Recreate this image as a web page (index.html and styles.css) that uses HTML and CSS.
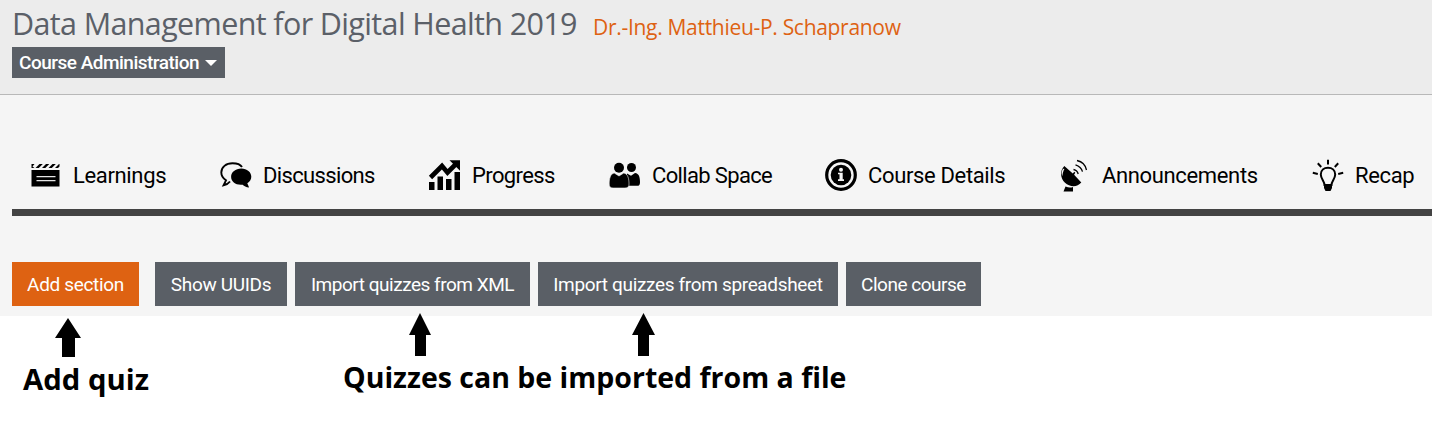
FILE: index.html
```html
<!DOCTYPE html>
<html lang="en">
<head>
<meta charset="utf-8">
<title>Data Management for Digital Health 2019</title>
<link rel="stylesheet" href="styles.css">
</head>
<body>
<div class="page">
  <header class="course-header">
    <div class="heading">
      <h1 class="title">Data Management for Digital Health 2019</h1>
      <span class="teacher">Dr.-Ing. Matthieu-P. Schapranow</span>
    </div>
    <button class="admin"><span class="admin-label">Course Administration</span><span class="caret"></span></button>
  </header>
  <main class="content">
    <nav class="tabs">
      <a class="tab"><svg class="icon" viewBox="0 0 32 32"><path d="M5.500 11 9.500 7h3.300l-4 4zM12 11l4-4h3.300l-4 4zM18.500 11l4-4h3.300l-4 4zM25 11l4-4h.5v2.500L28 11zM1.500 13h28v16h-28z"/><path d="M1.500 7h3l-2 2.500 2 1.500h-3z"/><path d="M1.500 29.500h28" stroke="#777"/><path d="M6.500 19.700h19M6.500 23.700h19" stroke="#e5e5e5" stroke-width="1.300"/></svg><span>Learnings</span></a>
      <a class="tab"><svg class="icon" viewBox="0 0 32 32"><path d="M22 10C20.500 7.500 17 6.200 12.500 6.200 6 6.200 1.300 10.200 1.300 15.500c0 3.500 2 6 4.700 7.800L3.500 28.300c3.200-.7 5.200-2 6.500-3.800" fill="none" stroke="#000" stroke-width="1.900"/><path d="M21.300 11.500c5.700 0 10 3.600 10 8.300 0 2.900-1.600 5-4 6.400l1.800 4.400c-3-.4-5-1.500-6.400-2.900-6.600.9-11.600-2.900-11.600-7.900 0-4.700 4.500-8.300 10.200-8.300z"/></svg><span>Discussions</span></a>
      <a class="tab"><svg class="icon" viewBox="0 0 32 32"><path d="M0 25h5.500v8H0zM8.500 19.500h5.500V33H8.500zM17 22h5.500v11H17zM25.500 15H31v18h-5.500z"/><path d="M1.500 20.500 13 9l5.500 6.500 9-9" fill="none" stroke="#000" stroke-width="4.600"/><path d="M20.500 3.200H31v10.500z"/></svg><span>Progress</span></a>
      <a class="tab"><svg class="icon" viewBox="0 0 32 32"><circle cx="10" cy="10.700" r="5"/><circle cx="22.500" cy="10.500" r="4.500"/><path d="M18 16.500l4 2.200 4-2.700c4 .5 5 4 5 9.200 0 2.500-.7 3.600-3 3.600H18z"/><path d="M.2 27c0-5.500 1.300-10.300 5-11l4.800 3 4.800-3c4 .7 5.200 5.500 5.200 11 0 2.700-1 4-4 4H4c-2.800 0-3.800-1.300-3.800-4z" stroke="#f5f5f5" stroke-width=".6"/></svg><span>Collab Space</span></a>
      <a class="tab"><svg class="icon" viewBox="0 0 32 32"><circle cx="16" cy="18" r="14.300" fill="none" stroke="#000" stroke-width="3.200"/><circle cx="16" cy="18" r="10.300"/><circle cx="16" cy="12.700" r="2" fill="#f5f5f5"/><path d="M13 15.800h4.700v6.500H19v1.600h-6v-1.600h1.500v-5H13z" fill="#f5f5f5"/></svg><span>Course Details</span></a>
      <a class="tab"><svg class="icon" viewBox="0 0 32 32"><path d="M5.300 9 13.800 16.500l1.500-1.700 1 1-1.200 2 7.200 7.700c-4 5-11.500 4.700-16.300.2C1.300 21.200.6 14 5.300 9z"/><path d="M3.600 12.500c-1.300 2.500-1.200 4.700-.2 6.500.2-2.600.9-5 2-7-.6-.4-1.300-.3-1.800.5z" fill="#f5f5f5"/><path d="M6.500 29.500c3 1.300 5.200 1.300 7.500.5v4.400H4.500z"/><path d="M14.500 12.500c3 .6 4.200 2.300 4.700 4.500M16.500 7.900c4 1.200 6.200 3.800 7 6.800M18 3.500c5.300 1.200 8.600 5 9.500 9.500" fill="none" stroke="#000" stroke-width="1.300"/></svg><span>Announcements</span></a>
      <a class="tab"><svg class="icon" viewBox="0 0 32 32"><path d="M12.500 28c0-4-3.700-6.300-3.700-10.500 0-4.200 3.200-6.800 7.200-6.800s7.200 2.600 7.200 6.800c0 4.200-3.700 6.500-3.700 10.500z" fill="none" stroke="#000" stroke-width="2"/><path d="M12 27h8v4l-1.500 3h-5L12 31z"/><path d="M16 2.800v4.800M5.800 6.300l3.400 3.700M26.200 6.300 22.800 10M.8 15.800l5 1.100M31.200 15.800l-5 1.100" fill="none" stroke="#000" stroke-width="2"/></svg><span>Recap</span></a>
    </nav>
    <div class="actions">
      <button class="btn primary">Add section</button>
      <button class="btn">Show UUIDs</button>
      <button class="btn wide">Import quizzes from XML</button>
      <button class="btn">Import quizzes from spreadsheet</button>
      <button class="btn wide">Clone course</button>
    </div>
  </main>
  <div class="notes">
    <span class="note-add">Add quiz</span>
    <span class="note-import">Quizzes can be imported from a file</span>
  </div>
  <svg class="arrows" viewBox="0 0 700 50"><path d="M68 8l13 20h-6v19H62V28h-7zM420 3l11 22h-5v21h-11V25h-6zM643.500 3 655 25h-6v21h-11V25h-6z"/></svg>
</div>
</body>
</html>
```
FILE: styles.css
```css
* { box-sizing: border-box; }
body { margin: 0; background: #fff; font-family: Roboto, "Noto Sans", sans-serif; color: #000; }
.page { position: relative; width: 1432px; height: 421px; overflow: hidden; }
.course-header { height: 95px; padding: 0 12px; background: #ececec; border-bottom: 1px solid #b8b8b8; }
.heading { display: flex; align-items: baseline; gap: 16px; height: 47px; font-family: "Open Sans", "Noto Sans", sans-serif; white-space: nowrap; }
.title { margin: 0; width: 565px; font-size: 30.5px; line-height: 46px; font-weight: 400; color: #5b6068; letter-spacing: -0.63px; }
.teacher { font-size: 21px; color: #de6212; letter-spacing: -0.3px; }
.admin { display: flex; align-items: center; gap: 5px; width: 213px; height: 31px; padding: 1px 0 0 7px; border: 0; background: #5a5f66; color: #fff; font: 500 19px/30px Roboto, sans-serif; letter-spacing: -0.5px; white-space: nowrap; }
.admin-label { width: 181px; text-align: left; }
.caret { border: 6px solid transparent; border-top-color: #fff; border-bottom: 0; }
.content { height: 221px; padding: 50px 0 0 12px; background: #f5f5f5; }
.tabs { display: grid; grid-template-columns: 190px 209px 180px 216px 234px 253px 1fr; height: 71px; padding-left: 18px; border-bottom: 7px solid #434343; }
.tab { display: flex; align-items: center; gap: 11px; height: 60px; font-size: 22px; line-height: 60px; letter-spacing: -0.35px; white-space: nowrap; }
.tab span { padding-top: 1px; }
.tab:nth-child(2), .tab:nth-child(4) { letter-spacing: -0.65px; }
.tab:nth-child(3) { letter-spacing: -0.6px; }
.tab:nth-child(5) { letter-spacing: -0.35px; }
.icon { width: 32px; height: 32px; flex: none; overflow: visible; margin-top: -4px; }
.actions { display: grid; grid-template-columns: 135px 132px 235px 300px 135px; gap: 8px; padding-top: 46px; }
.btn { height: 44px; padding: 1px 0 0; border: 0; background: #5a5f66; color: #fff; font: 400 19px/43px Roboto, sans-serif; letter-spacing: -0.34px; white-space: nowrap; }
.primary { width: 127px; background: #de6212; }
.wide { letter-spacing: -0.48px; }
.notes { display: flex; padding: 40px 0 0 23px; font: 700 28.5px/42px "Open Sans", "Noto Sans", sans-serif; white-space: nowrap; }
.note-add { width: 320px; padding-top: 2px; font-size: 29.3px; }
.arrows { position: absolute; left: 0; top: 310px; width: 700px; height: 50px; }
```
